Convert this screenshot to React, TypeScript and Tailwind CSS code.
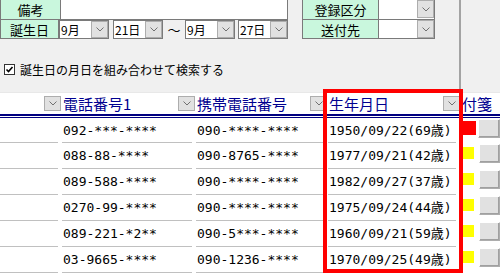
import React from "react";

const JP = "font-['Noto_Sans_CJK_JP',sans-serif]";
const MONO = "font-['DejaVu_Sans_Mono','Noto_Sans_CJK_JP',monospace]";

function Chevron() {
  return (
    <svg width="8" height="5" viewBox="0 0 8 5" className="block">
      <polyline points="0.5,0.5 4,4 7.5,0.5" fill="none" stroke="#707070" strokeWidth="1" />
    </svg>
  );
}

function DropBtn({ className = "" }: { className?: string }) {
  return (
    <div
      className={`flex items-center justify-center bg-[#e1e1e1] border border-[#adadad] ${className}`}
    >
      <Chevron />
    </div>
  );
}

function Select({ value }: { value: string }) {
  return (
    <div className="flex h-[19px] w-[50px] bg-white border border-[#7a7a7a]">
      <div className={`flex-1 flex items-center pl-[1px] text-[12px] leading-none text-black ${JP}`}>
        {value}
      </div>
      <DropBtn className="w-[17px] h-[17px]" />
    </div>
  );
}

function Label({ text, w, h }: { text: string; w: string; h: string }) {
  return (
    <div
      className={`${w} ${h} flex items-center justify-center bg-[#c9f7dd] border-l border-r border-b border-[#7a7a7a] text-[13px] leading-none text-black ${JP}`}
    >
      {text}
    </div>
  );
}

const rows = [
  { t1: "092-***-****", t2: "090-****-****", b: "1950/09/22(69歳)", flag: "red" },
  { t1: "088-88-****", t2: "090-8765-****", b: "1977/09/21(42歳)", flag: "yellow" },
  { t1: "089-588-****", t2: "090-****-****", b: "1982/09/27(37歳)", flag: "yellow" },
  { t1: "0270-99-****", t2: "090-****-****", b: "1975/09/24(44歳)", flag: "yellow" },
  { t1: "089-221-*2**", t2: "090-5***-****", b: "1960/09/21(59歳)", flag: "yellow" },
  { t1: "03-9665-****", t2: "090-1236-****", b: "1970/09/25(49歳)", flag: "yellow" },
];

function HeaderCell({ w, text, btn }: { w: string; text?: string; btn?: boolean }) {
  return (
    <div className={`${w} h-full flex items-center`}>
      <div
        className={`flex-1 min-w-0 pl-[1px] text-[15px] leading-[20px] text-[#000090] whitespace-nowrap ${JP}`}
      >
        {text}
      </div>
      {btn && <DropBtn className="w-[17px] h-[15px] mr-[1px] shrink-0" />}
    </div>
  );
}

export default function App() {
  return (
    <div className="w-[500px] h-[273px] bg-[#f0f0f0] overflow-hidden relative">
      {/* top form */}
      <div className="flex h-[92px]">
        <div className="w-[459px] flex flex-col">
          <div className="flex">
            {/* left form */}
            <div className="w-[288px] flex flex-col">
              <div className="flex h-[20px]">
                <Label text="備考" w="w-[61px]" h="h-[20px]" />
                <div className="flex-1 bg-white border-r border-b border-[#7a7a7a]" />
              </div>
              <div className="flex h-[19px] items-end">
                <Label text="誕生日" w="w-[61px]" h="h-[19px]" />
                <div className="flex items-start h-[19px]">
                  <Select value="9月" />
                  <div className="w-[4px]" />
                  <Select value="21日" />
                  <div className={`w-[22px] flex items-center justify-center h-[19px] text-[13px] leading-none text-black ${JP}`}>
                    ～
                  </div>
                  <Select value="9月" />
                  <div className="w-[3px]" />
                  <Select value="27日" />
                </div>
              </div>
            </div>
            {/* right form */}
            <div className="ml-[14px] w-[133px] flex flex-col">
              <div className="flex h-[20px]">
                <Label text="登録区分" w="w-[77px]" h="h-[20px]" />
                <div className="flex-1 flex bg-white border-r border-b border-[#7a7a7a]">
                  <div className="flex-1" />
                  <DropBtn className="w-[17px] h-[18px]" />
                </div>
              </div>
              <div className="flex h-[19px]">
                <Label text="送付先" w="w-[77px]" h="h-[19px]" />
                <div className="flex-1 flex bg-white border-r border-b border-[#7a7a7a]">
                  <div className="flex-1" />
                  <DropBtn className="w-[17px] h-[18px]" />
                </div>
              </div>
            </div>
          </div>
          {/* checkbox */}
          <div className="flex items-center mt-[24px] ml-[4px] h-[13px]">
            <div className="w-[11px] h-[11px] bg-white border border-[#333333] flex items-center justify-center">
              <svg width="9" height="9" viewBox="0 0 9 9" className="block">
                <polyline points="1.5,4.5 3.5,6.5 7.5,2" fill="none" stroke="#000" strokeWidth="1.6" />
              </svg>
            </div>
            <div className={`ml-[5px] text-[12px] leading-none text-black ${JP}`}>
              誕生日の月日を組み合わせて検索する
            </div>
          </div>
        </div>
        <div className="w-[2px] h-full bg-[#a3a3a3]" />
      </div>

      {/* table */}
      <div className="bg-white">
        <div className="flex h-[22px] border-t border-[#e8e8e8]">
          <HeaderCell w="w-[62px]" btn />
          <HeaderCell w="w-[134px]" text="電話番号1" btn />
          <HeaderCell w="w-[132px]" text="携帯電話番号" btn />
          <HeaderCell w="w-[133px]" text="生年月日" btn />
          <HeaderCell w="w-[39px]" text="付箋" />
        </div>
        <div className="h-[2px] bg-[#000080]" />
        <div className="h-[1px] bg-white" />
        <div className="h-[1px] bg-[#000080]" />
        {rows.map((r, i) => (
          <div key={i} className={`flex ${i === 0 ? "h-[25px]" : "h-[26px]"}`}>
            <div className="w-[62px] pr-[4px]">
              <div className="h-full border-b border-[#c0c0c0]" />
            </div>
            <div className="w-[134px] pr-[4px]">
              <div className={`h-full border-b border-[#c0c0c0] flex items-center pl-[1px] text-[13px] leading-none text-black ${MONO}`}>
                {r.t1}
              </div>
            </div>
            <div className="w-[132px] pr-[4px]">
              <div className={`h-full border-b border-[#c0c0c0] flex items-center pl-[1px] text-[13px] leading-none text-black ${MONO}`}>
                {r.t2}
              </div>
            </div>
            <div className="w-[133px] pr-[5px]">
              <div className={`h-full border-b border-[#c0c0c0] flex items-center pl-[1px] text-[13px] leading-none text-black ${MONO}`}>
                {r.b}
              </div>
            </div>
            <div className="w-[39px] flex items-start pl-[2px] bg-white">
              {r.flag === "red" ? (
                <div className="w-[15px] h-[14px] mt-[3px] bg-[#ff0000]" />
              ) : (
                <div className="w-[12px] h-[12px] mt-[4px] bg-[#ffff00] mr-[3px]" />
              )}
              <div className="ml-[2px] mt-[1px] w-[24px] h-[19px] bg-[#e1e1e1] border border-[#adadad] border-t-white border-l-white shadow-[inset_-1px_-1px_0_#a0a0a0]" />
            </div>
          </div>
        ))}
      </div>

      {/* red highlight box */}
      <div className="absolute left-[323px] top-[89px] w-[140px] h-[184px] border-4 border-[#ff0000] pointer-events-none" />
    </div>
  );
}
